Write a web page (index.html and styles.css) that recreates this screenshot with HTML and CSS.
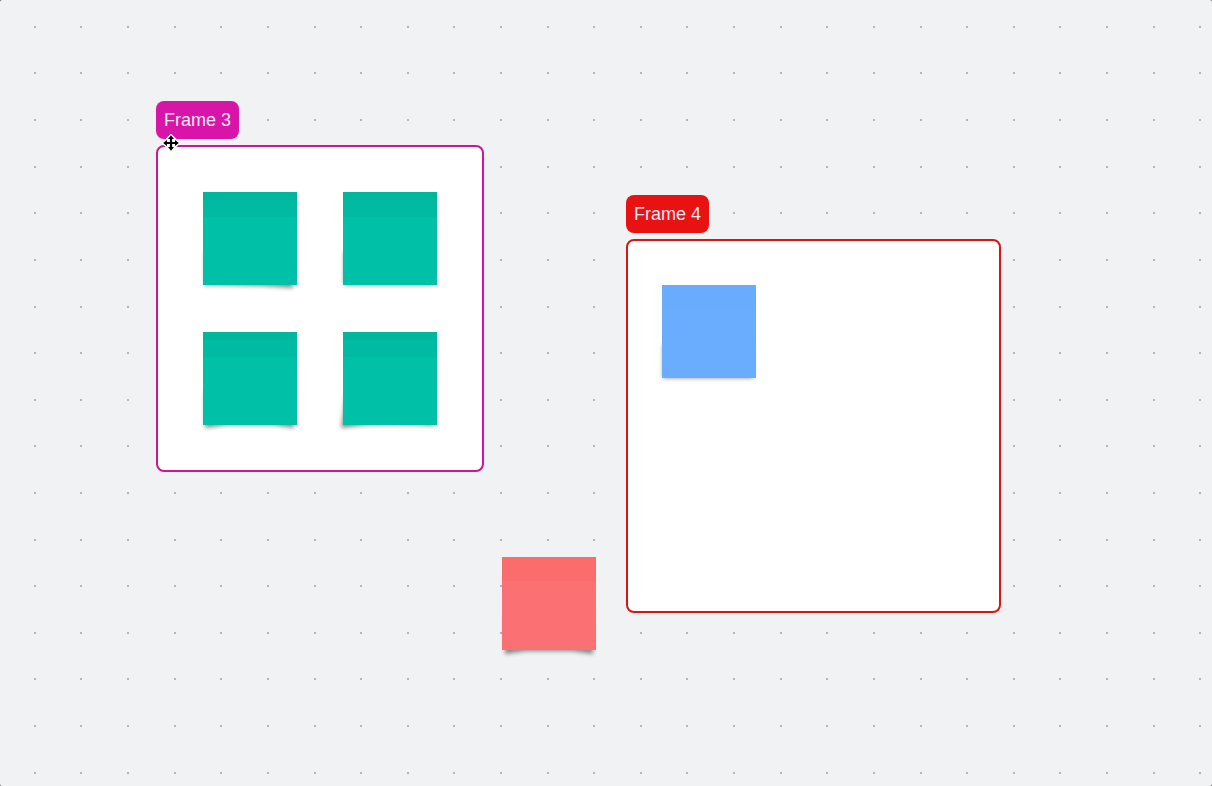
FILE: index.html
```
<!DOCTYPE html>
<html lang="en">
<head>
    <meta charset="UTF-8">
    <meta name="viewport" content="width=device-width, initial-scale=1.0">
    <title>Board</title>
    <link rel="stylesheet" href="styles.css">
</head>
<body>

    <main class="board">
        <svg class="grid" id="grid" aria-hidden="true"></svg>

        <section class="frame frame-3">
            <h2 class="frame-label">Frame 3</h2>
            <div class="frame-area">
                <div class="note green">
                    <svg class="shadow" viewBox="0 0 94 93" aria-hidden="true"><path d="M2 60H90V96L60 94 2 93Z"/></svg>
                </div>
                <div class="note green">
                    <svg class="shadow" viewBox="0 0 94 93" aria-hidden="true"><path d="M1 60H89V93H1Z"/></svg>
                </div>
                <div class="note green">
                    <svg class="shadow" viewBox="0 0 94 93" aria-hidden="true"><path d="M2 60H91V96L70 93H24L2 96Z"/></svg>
                </div>
                <div class="note green">
                    <svg class="shadow" viewBox="0 0 94 93" aria-hidden="true"><path d="M3 60H91V94L60 92 24 93 -2 96Z"/></svg>
                </div>
            </div>
        </section>

        <section class="frame frame-4">
            <h2 class="frame-label">Frame 4</h2>
            <div class="frame-area">
                <div class="note blue">
                    <svg class="shadow" viewBox="0 0 94 93" aria-hidden="true"><path d="M1 60H91V93H1Z"/></svg>
                </div>
            </div>
        </section>

        <div class="note red loose">
            <svg class="shadow" viewBox="0 0 94 93" aria-hidden="true"><path d="M3 60H91V97L70 94H24L3 97Z"/></svg>
        </div>

        <!-- Move cursor -->
        <svg class="cursor" width="18" height="18" viewBox="0 0 18 18" aria-hidden="true">
            <path d="M9 1 17 9 9 17 1 9Z" fill="#fff" stroke="#fff" stroke-width="2" stroke-linejoin="round"/>
            <path d="M9 3V15M3 9H15" stroke="#000" stroke-width="2.200"/>
            <path d="M9 1.200 12 5H6ZM9 16.800 6 13H12ZM1.200 9 5 6V12ZM16.800 9 13 12V6Z" fill="#000"/>
        </svg>
    </main>

    <script src="script.js"></script>

</body>
</html>
```
FILE: styles.css
```
body {
    font-family: "Liberation Sans", Arial, sans-serif;
    background-color: #55575a;
    margin: 0;
}
.board {
    position: relative;
    min-height: 100vh;
    background-color: #f0f2f4; /* Light gray canvas */
    border-radius: 2px;
    overflow: hidden;
}
.grid {
    position: absolute;
    inset: 0;
    width: 100%;
    height: 100%;
    fill: #b4b6b8;
}

/* Frames */
.frame {
    position: absolute;
    display: flex;
    flex-direction: column;
    align-items: flex-start;
    gap: 6px;
}
.frame-3 {
    left: 156px;
    top: 101px;
    --frame-color: #d914a9;
    --frame-border: #cc149c;
}
.frame-4 {
    left: 626px;
    top: 195px;
    --frame-color: #e91212;
    --frame-border: #d91414;
}
.frame-label {
    margin: 0;
    padding: 0 8px;
    background-color: var(--frame-color);
    border-radius: 8px;
    color: #fbe6f2;
    font-size: 18px;
    font-weight: normal;
    line-height: 38px;
}
.frame-area {
    box-sizing: border-box;
    background-color: #fff;
    border: 2px solid var(--frame-border);
    border-radius: 8px;
}
.frame-3 .frame-area {
    display: grid;
    grid-template-columns: auto auto;
    gap: 47px 46px;
    padding: 45px;
}
.frame-4 .frame-area {
    width: 375px;
    height: 374px;
    padding: 44px 34px;
}

/* Sticky notes */
.note {
    position: relative;
    isolation: isolate;
    width: 94px;
    height: 93px;
}
.note::after {
    content: "";
    position: absolute;
    inset: 0;
}
.green::after {
    background: linear-gradient(#00b69d 8px, #00bba1 8px, #00bba1 25px, #00c1a8 25px);
}
.blue::after {
    background: linear-gradient(#69abfd 22px, #6aadff 22px);
}
.red::after {
    background: linear-gradient(#fb6d6d 24px, #fb7072 24px);
}
.shadow {
    position: absolute;
    inset: 0;
    width: 100%;
    height: 100%;
    overflow: visible;
    filter: blur(2px);
    fill: #000;
    fill-opacity: 0.45;
}
.note.loose {
    position: absolute;
    left: 502px;
    top: 557px;
}

.cursor {
    position: absolute;
    left: 162px;
    top: 134px;
    overflow: visible;
}
```
FILE: script.js
```
// Draw the dot grid of the canvas, snapped to whole pixels
const STEP = 46.62;
const START_X = 33.8;
const START_Y = 25.8;
const grid = document.getElementById('grid');

function drawGrid() {
    grid.innerHTML = '';
    for (let y = START_Y; y < grid.clientHeight; y += STEP) {
        for (let x = START_X; x < grid.clientWidth; x += STEP) {
            const dot = document.createElementNS('http://www.w3.org/2000/svg', 'rect');
            dot.setAttribute('x', Math.round(x));
            dot.setAttribute('y', Math.round(y));
            dot.setAttribute('width', 2);
            dot.setAttribute('height', 2);
            grid.appendChild(dot);
        }
    }
}

drawGrid();
window.addEventListener('resize', drawGrid);
```
